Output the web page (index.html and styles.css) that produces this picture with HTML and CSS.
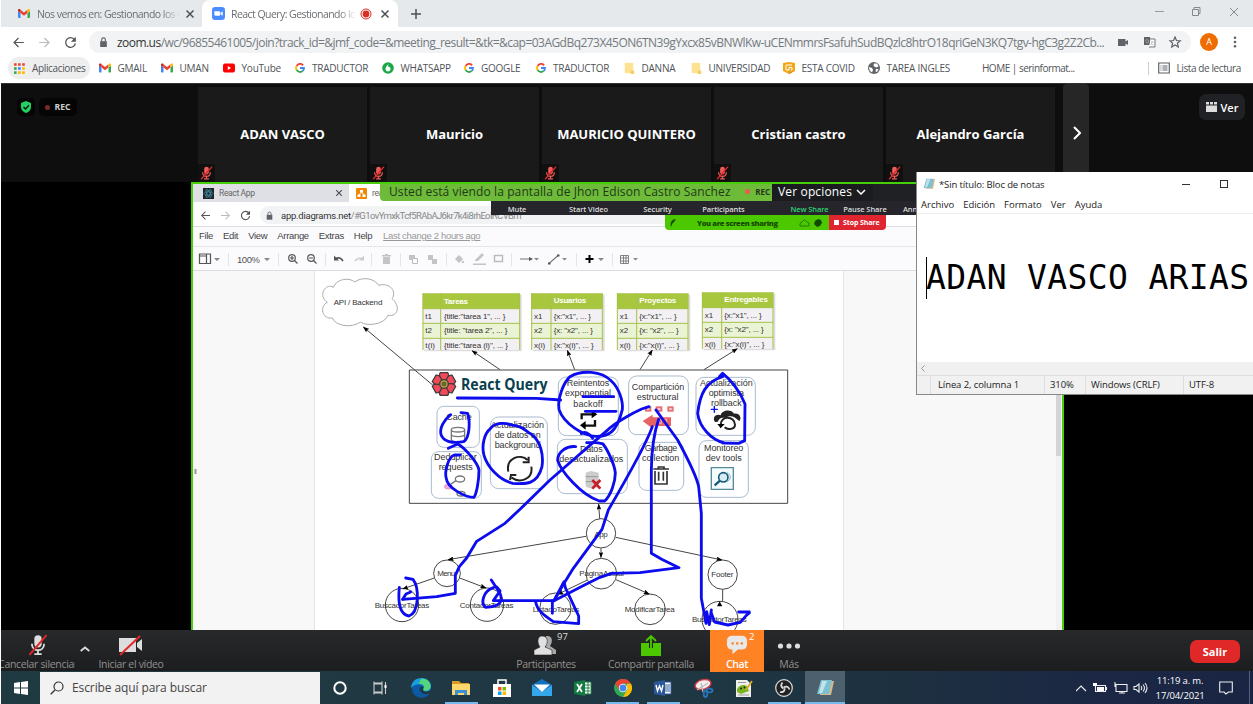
FILE: index.html
```html
<!DOCTYPE html>
<html lang="es">
<head>
<meta charset="utf-8">
<title>React Query: Gestionando los datos</title>
<link rel="stylesheet" href="styles.css">
</head>
<body>
<svg class="defs" width="0" height="0">
  <defs>
    <symbol id="gmail" viewBox="0 0 24 18"><path fill="#4285f4" d="M0 16V4l5 4v10H2q-2 0-2-2z"/><path fill="#34a853" d="M19 18V8l5-4v12q0 2-2 2z"/><path fill="#ea4335" d="M5 8V1.500l7 5.500 7-5.500V8l-7 5.500z"/><path fill="#c5221f" d="M0 4V2.500C0 0 3-.8 5 1v7z"/><path fill="#fbbc04" d="M24 4V2.500C24 0 21-.8 19 1v7z"/></symbol>
    <symbol id="google" viewBox="0 0 24 24"><g fill="none" stroke-width="4.500"><path stroke="#ea4335" d="M19.500 5.500A9.500 9.500 0 0 0 4 7"/><path stroke="#fbbc04" d="M4 7a9.500 9.500 0 0 0 0 10"/><path stroke="#34a853" d="M4 17a9.500 9.500 0 0 0 14.500 2"/><path stroke="#4285f4" d="M18.500 19a9 9 0 0 0 3-7H12"/></g></symbol>
    <symbol id="close" viewBox="0 0 10 10"><path d="M1.500 1.500l7 7m0-7l-7 7" fill="none" stroke="#4d5156" stroke-width="1.500"/></symbol>
    <symbol id="back" viewBox="0 0 16 16"><path d="M14.500 8H3m5-5.500L2.500 8 8 13.500" fill="none" stroke="currentColor" stroke-width="1.500"/></symbol>
    <symbol id="reload" viewBox="0 0 16 16"><path d="M13 4.500A6 6 0 1 0 14 9" fill="none" stroke="currentColor" stroke-width="1.600"/><path d="M14.500 1v6h-6z" fill="currentColor"/></symbol>
    <symbol id="lock" viewBox="0 0 10 12"><path d="M1 5h8v7H1z" fill="#5f6368"/><path d="M2.800 5V3.200a2.200 2.200 0 0 1 4.400 0V5" fill="none" stroke="#5f6368" stroke-width="1.300"/></symbol>
    <symbol id="micoff" viewBox="0 0 16 18"><rect x="5" y="1" width="6" height="10" rx="3" fill="currentColor"/><path d="M3 8c0 7 10 7 10 0M8 13v3M5 16.500h6" fill="none" stroke="currentColor" stroke-width="1.500"/><path d="M1 17L15 1" stroke="#e02828" stroke-width="1.600"/></symbol>
    <symbol id="folder" viewBox="0 0 12 14"><path fill="#fde293" d="M1 1h10v12H1z"/><path fill="#f6cf62" d="M8 10h4v4H8z"/></symbol>
    <symbol id="note" viewBox="0 0 18 18"><path fill="#d7b98a" d="M6 2h12l-3 14H4z"/><path fill="#7cc0d2" d="M5 1h11l-3 14H1z"/><path fill="#c0e3e9" d="M6 2h5L6 14H3z"/></symbol>
  </defs>
</svg>

<header class="tabs">
  <div class="tab idle"><svg class="fav"><use href="#gmail"/></svg><span class="tabname">Nos vemos en: Gestionando los d</span><svg class="x"><use href="#close"/></svg></div>
  <div class="tab live"><svg class="fav zoomfav" viewBox="0 0 14 14"><rect width="14" height="14" rx="3.500" fill="#4a8cff"/><path fill="#fff" d="M2.500 4.500H8.500V9.500H4Q2.500 9.500 2.500 8zM9 6.500L11.500 4.500v5L9 7.800z"/></svg><span class="tabname">React Query: Gestionando los</span><svg class="rec" viewBox="0 0 12 12"><circle cx="6" cy="6" r="5" fill="none" stroke="#d93025"/><circle cx="6" cy="6" r="3.400" fill="#d93025"/></svg><svg class="x"><use href="#close"/></svg></div>
  <svg class="plus" viewBox="0 0 10 10"><path d="M5 0v10M0 5h10" stroke="#4d5156" stroke-width="1.500"/></svg>
  <svg class="winbtns" viewBox="0 0 84 10"><path d="M0 4.500h9" stroke="#999"/><path d="M37.500 2.500h6v6h-6zM39 2.500v-2h6v6h-1.500M75 1l8 8m0-8l-8 8" fill="none" stroke="#888"/></svg>
</header>

<nav class="address">
  <svg class="nav"><use href="#back"/></svg>
  <svg class="nav fwd"><use href="#back"/></svg>
  <svg class="nav"><use href="#reload"/></svg>
  <div class="url"><svg class="lock"><use href="#lock"/></svg><span class="link"><b>zoom.us</b>/wc/96855461005/join?track_id=&amp;jmf_code=&amp;meeting_result=&amp;tk=&amp;cap=03AGdBq273X45ON6TN39gYxcx85vBNWlKw-uCENmmrsFsafuhSudBQzlc8htrO18qriGeN3KQ7tgv-hgC3g2Z2Cb...</span>
    <svg class="urlicons" viewBox="0 0 64 12"><path fill="#5f6368" d="M0 3h7.500v2.500L10 4v5L7.500 7.500V10H0z"/><path fill="#5f6368" d="M26 1h6l2 8h-8z"/><path d="M32.500 3H37v8h-6" fill="#fff" stroke="#777"/><path d="M27.500 4.500q3-2 3 .8t-3 .5M33 6h3m-2-1v1q0 2-1.500 3m.5-2l2.500 2.500" fill="none" stroke="#bbb" stroke-width=".8"/><path d="M57 1l1.500 3.500 3.700.3-2.800 2.400.9 3.800-3.300-2-3.300 2 .9-3.800L52 4.800l3.600-.3z" fill="none" stroke="#5f6368" stroke-width="1.200"/></svg>
  </div>
  <span class="avatar">A</span>
  <svg class="kebab" viewBox="0 0 4 12"><g fill="#5f6368"><circle cx="2" cy="1.700" r="1.300"/><circle cx="2" cy="6" r="1.300"/><circle cx="2" cy="10.300" r="1.300"/></g></svg>
</nav>

<nav class="marks">
  <span class="apps"><svg viewBox="0 0 11 11"><path d="M0 1.500h11" stroke="#ea4335" stroke-width="2.600" stroke-dasharray="2.600 1.500"/><path d="M0 5.500h2.600" stroke="#34a853" stroke-width="2.600"/><path d="M4.100 5.500h2.600" stroke="#4285f4" stroke-width="2.600"/><path d="M8.200 5.500h2.600M4.100 9.600h6.900" stroke="#fbbc04" stroke-width="2.600" stroke-dasharray="2.600 1.500"/><path d="M0 9.600h2.600" stroke="#34a853" stroke-width="2.600"/></svg>Aplicaciones</span>
  <span><svg><use href="#gmail"/></svg>GMAIL</span>
  <span><svg><use href="#gmail"/></svg>UMAN</span>
  <span><svg viewBox="0 0 12 12"><rect y="1.500" width="12" height="9" rx="2" fill="#f00"/><path fill="#fff" d="M4.800 4v4L8 6z"/></svg>YouTube</span>
  <span class="g"><svg><use href="#google"/></svg>TRADUCTOR</span>
  <span><svg viewBox="0 0 12 12"><circle cx="6" cy="6" r="5.800" fill="#19a845"/><path fill="#fff" d="M3.500 7.500q0-3 3-5.500l-.5 2.500q3 .5 2.500 3A2.600 2.600 0 0 1 3.500 7.500z"/></svg>WHATSAPP</span>
  <span class="g"><svg><use href="#google"/></svg>GOOGLE</span>
  <span class="g"><svg><use href="#google"/></svg>TRADUCTOR</span>
  <span><svg><use href="#folder"/></svg>DANNA</span>
  <span><svg><use href="#folder"/></svg>UNIVERSIDAD</span>
  <span><svg viewBox="0 0 12 12"><path fill="#f2a516" d="M0 1l6-1 6 1v8l-6 3-6-3z"/><path fill="#b96a0e" d="M6 11l5-2-5 3z"/><path d="M9 3H3v5h3V5.500h3V8H8" fill="none" stroke="#fff"/></svg>ESTA COVID</span>
  <span><svg viewBox="0 0 12 12"><circle cx="6" cy="6" r="6" fill="#5f6368"/><path fill="#fff" d="M1 5l3 1 1 2-1 2.500Q1 9 1 5zM6 1.500l3 0L10.500 4 9 5.500 7 5 5.500 3.500zM8 7l2.500 0-1.500 3-1.500-.5z"/></svg>TAREA INGLES</span>
  <span class="home">HOME | serinformat...</span>
  <span class="reading"><svg viewBox="0 0 12 12"><path d="M.7 1h10.600v10H.7z" fill="none" stroke="#5f6368" stroke-width="1.200"/><path d="M2.500 4h1m1 0H9.500m-7 2h1m1 0h5m-7 2h1m1 0h5" stroke="#5f6368"/></svg>Lista de lectura</span>
</nav>

<main class="meeting">
  <section class="people">
    <div class="status"><span class="shield"><svg viewBox="0 0 12 12"><path fill="#23d160" d="M6 0l5 2v4q0 4-5 6-5-2-5-6V2z"/><path d="M3.500 6l2 2L9 4.200" fill="none" stroke="#111" stroke-width="1.300"/></svg></span><span class="recording"><i></i>REC</span></div>
    <div class="tile">ADAN VASCO<svg class="mic"><use href="#micoff"/></svg></div>
    <div class="tile">Mauricio<svg class="mic"><use href="#micoff"/></svg></div>
    <div class="tile">MAURICIO QUINTERO<svg class="mic"><use href="#micoff"/></svg></div>
    <div class="tile">Cristian castro<svg class="mic"><use href="#micoff"/></svg></div>
    <div class="tile">Alejandro García<svg class="mic"><use href="#micoff"/></svg></div>
    <div class="next"><svg viewBox="0 0 8 14"><path d="M1 1l6 6-6 6" fill="none" stroke="#fff" stroke-width="2"/></svg></div>
    <div class="view"><svg viewBox="0 0 11 10"><path d="M0 0h3v2.500H0zM4 0h3v2.500H4zM8 0h3v2.500H8zM0 3.500h11V10H0z" fill="#ddd"/></svg>Ver</div>
  </section>

  <section class="shared">
    <div class="stabs"><div class="stab"><svg viewBox="0 0 11 11"><path d="M0 0h11v11H0z" fill="#20232a"/><g fill="none" stroke="#3d8ba0" stroke-width=".8"><ellipse cx="5.500" cy="5.500" rx="4.500" ry="1.700"/><ellipse cx="5.500" cy="5.500" rx="4.500" ry="1.700" transform="rotate(60 5.500 5.500)"/><ellipse cx="5.500" cy="5.500" rx="4.500" ry="1.700" transform="rotate(120 5.500 5.500)"/></g></svg><span>React App</span><svg class="sx"><use href="#close"/></svg></div>
      <div class="stab on"><svg viewBox="0 0 11 11"><rect width="11" height="11" rx="1" fill="#f08705"/><path d="M5.500 4L3 7m2.500-3L8 7" stroke="#fff"/><path d="M4 2h3v2.500H4zM1.500 6.500h3V9h-3zM6.500 6.500h3V9h-3z" fill="#fff"/></svg><span>rea</span></div></div>
    <div class="saddr"><svg><use href="#back"/></svg><svg class="fwd"><use href="#back"/></svg><svg><use href="#reload"/></svg><div class="surl"><svg class="slock"><use href="#lock"/></svg><span><b>app.diagrams.net</b>/#G1ovYmxkTcf5RAbAJ6kr7k4i8rhEoIRCVBm</span></div></div>
    <div class="smenu"><span>File</span><span>Edit</span><span>View</span><span>Arrange</span><span>Extras</span><span>Help</span><u>Last change 2 hours ago</u></div>
    <div class="stools">
      <svg viewBox="193 247 868 23" width="868" height="23">
        <g fill="none" stroke="#555" stroke-width="1.200"><path d="M199.500 254h11v9.500h-11zM199.500 256h7m0-2v9.500"/><circle cx="292" cy="258" r="3.300"/><path d="M290 258h4m-2-2v4m2.500.5l3 3"/><circle cx="311" cy="258" r="3.300"/><path d="M309 258h4m.5 2.500l3 3"/><path d="M335 259q5-3 8 2" stroke-width="1.500"/></g>
        <g fill="none" stroke="#777" stroke-width="1.100"><path d="M520 259h10M549 263.500l9-8"/></g>
        <path fill="#555" d="M334 255.500v5h5zM529 257v4l4-2zM548 262.500h2.500v2H548zM557 254.500h2.500v2H557z"/><path fill="#ccc" d="M364 255.500v5h-5z"/><path d="M355 261q3-4 8-2" fill="none" stroke="#ccc" stroke-width="1.500"/>
        <path fill="#888" d="M214 258h6l-3 3zM264 258h6l-3 3zM534 258h5l-2.500 2.500zM562 258h5l-2.500 2.500zM598 258h6l-3 3zM633 258h5l-2.500 2.500z"/>
        <path d="M228.500 253v13M278.500 253v13M325.500 253v13M371.500 253v13M400.500 253v13M446.500 253v13M511.500 253v13M576.500 253v13M612.500 253v13" stroke="#e4e4e4"/>
        <path fill="#c4c4c4" d="M382 255h9v1.500h-9zM385 254h3v1h-3zM383 257h7v7h-7zM409 255h6v5h-6zM428 255h5v5h-5zM432 259h5v5h-5zM455 259l4-4 4 4-4 4zM463 260l1.500 3h-3zM473 263.500h13v1.500h-13zM475 260l7-7 2 2-6 6h-3z"/><path d="M412.500 258.500h5v5h-5z" fill="#fbfbfd" stroke="#bbb"/>
        <path d="M494.500 255.500h8v6h-8z" fill="none" stroke="#bbb" stroke-width="1.500"/><path d="M589.500 255v8m-4-4h8" stroke="#000" stroke-width="2"/><path d="M620.500 255.500h8v8h-8zM623.500 255v9m2.500-9v9m-6-6h9m-9 3h9" fill="none" stroke="#777" stroke-width=".9"/>
        <text x="237" y="262.500" font-size="9.500" textLength="23" fill="#555">100%</text>
      </svg>
    </div>
    <div class="canvas">
      <div class="paper"></div>
      <svg class="diagram" viewBox="193 271 870 359" width="870" height="359">
        <defs>
          <marker id="arr" markerWidth="18" markerHeight="14" refX="17" refY="7" orient="auto" markerUnits="userSpaceOnUse"><path d="M0 0l18 7-18 7 3-7z"/></marker>
          <g id="grid3"><path d="M4 4h216v170H4z" fill="#ddd"/><path fill="#f2f0f2" d="M0 0h214v170H0z"/><path fill="#a9c63f" d="M0 0h214v46H0z"/><path fill="#eaf3d3" d="M0 90h214v45H0z"/><path d="M1 0v170M59 0v170M213 0v170M0 46h214M0 90h214M0 135h214" stroke="#a5c249" stroke-width="3"/></g>
        </defs>
        <path d="M195.500 469v5" stroke="#999" stroke-width="2"/>
        <path d="M1056 271h5v359h-5z" fill="#f1f1f1"/><path d="M1056 390h5v66h-5z" fill="#d4d4d4"/>
        <g transform="translate(310 270) scale(.33333)" class="draw">
          <path class="thin" stroke="#aaa" d="M70 52C80 25 120 22 134 36c25-18 60-10 72 10 35-10 55 20 40 40 25 20 20 55-12 50-10 28-65 34-82 20-30 20-75 12-85-12-30 5-40-35-15-47-30-20-5-60 18-45z"/>
          <text x="71" y="105" textLength="146">API / Backend</text>
          <g class="table"><path fill="#ddd" d="M342 74h293v170H342z"/><path fill="#f2f0f2" d="M338 70h292v170H338z"/><path fill="#a9c63f" d="M338 70h292v46H338z"/><path fill="#eaf3d3" d="M338 160h292v45H338z"/><path d="M339 70v170M392 70v170M629 70v170M338 116h292M338 160h292M338 205h292" stroke="#a5c249" stroke-width="3"/>
          <text class="th" x="402" y="102" textLength="72">Tareas</text><text x="346" y="147" textLength="20">t1</text><text x="402" y="147" textLength="184">{title:"tarea 1", ... }</text><text x="346" y="190" textLength="20">t2</text><text x="402" y="190" textLength="190">{title: "tarea 2", ... }</text><text x="346" y="234" textLength="29">t(i)</text><text x="402" y="234" textLength="192">{title:"tarea (i)", ... }</text></g>
          <g class="table" transform="translate(664 70)"><use href="#grid3"/><text class="th" x="67" y="30" textLength="98">Usuarios</text><text x="8" y="76">x1</text><text x="67" y="76" textLength="112">{x:"x1", ... }</text><text x="8" y="120">x2</text><text x="67" y="120" textLength="118">{x: "x2", ... }</text><text x="8" y="163">x(i)</text><text x="67" y="163" textLength="120">{x:"x(i)", ... }</text></g>
          <g class="table" transform="translate(921 70)"><use href="#grid3"/><text class="th" x="67" y="30" textLength="111">Proyectos</text><text x="8" y="76">x1</text><text x="67" y="76" textLength="112">{x:"x1", ... }</text><text x="8" y="120">x2</text><text x="67" y="120" textLength="118">{x: "x2", ... }</text><text x="8" y="163">x(i)</text><text x="67" y="163" textLength="120">{x:"x(i)", ... }</text></g>
          <g class="table" transform="translate(1176 67)"><use href="#grid3"/><text class="th" x="67" y="30" textLength="131">Entregables</text><text x="8" y="76">x1</text><text x="67" y="76" textLength="112">{x:"x1", ... }</text><text x="8" y="120">x2</text><text x="67" y="120" textLength="118">{x: "x2", ... }</text><text x="8" y="163">x(i)</text><text x="67" y="163" textLength="120">{x:"x(i)", ... }</text></g>
          <path class="thin" d="M298 300h1135v400H298z"/>
          <g class="thin link" marker-end="url(#arr)"><path d="M368 345L160 171"/><path d="M570 299L486 242"/><path d="M794 299L772 241"/><path d="M990 299L1027 240"/><path d="M1182 299L1282 236"/></g>
          <g fill="#f04a5c" stroke="#403d3a" stroke-width="4"><path id="petal" d="M402 336C387 326 386 314 391 308h22C418 314 417 326 402 336z"/><use href="#petal" transform="rotate(60 402 342)"/><use href="#petal" transform="rotate(120 402 342)"/><use href="#petal" transform="rotate(180 402 342)"/><use href="#petal" transform="rotate(240 402 342)"/><use href="#petal" transform="rotate(300 402 342)"/><circle cx="402" cy="342" r="13" fill="#b5a642"/></g>
          <circle cx="402" cy="342" r="6" fill="#777128" stroke="#403d3a" stroke-width="2"/>
          <text class="brand" x="453" y="361" textLength="260" lengthAdjust="spacingAndGlyphs">React Query</text>
          <g class="box"><rect x="381" y="409" width="127" height="123" rx="20"/><rect x="364" y="545" width="150" height="140" rx="22"/><rect x="541" y="441" width="171" height="215" rx="25"/><rect x="745" y="321" width="180" height="176" rx="24"/><rect x="742" y="508" width="210" height="163" rx="24"/><rect x="956" y="318" width="179" height="176" rx="24"/><rect x="987" y="517" width="134" height="144" rx="22"/><rect x="1158" y="322" width="178" height="174" rx="24"/><rect x="1167" y="512" width="148" height="170" rx="22"/></g>
          <g class="label"><text x="447" y="450" textLength="76">Cache</text><text x="436" y="569" textLength="128">Deduplicar</text><text x="437" y="600" textLength="102">requests</text><text x="622" y="474" textLength="160">Actualización</text><text x="623" y="504" textLength="138">de datos en</text><text x="623" y="535" textLength="138">background</text><text x="834" y="348" textLength="128">Reintentos</text><text x="834" y="379" textLength="138">exponential</text><text x="834" y="410" textLength="88">backoff</text><text x="1044" y="359" textLength="157">Compartición</text><text x="1043" y="389" textLength="125">estructural</text><text x="1249" y="347" textLength="158">Actualización</text><text x="1249" y="377" textLength="106">optimista</text><text x="1249" y="407" textLength="92">rollback</text><text x="844" y="547" textLength="68">Datos</text><text x="844" y="577" textLength="192">desactualizados</text><text x="1053" y="544" textLength="98">Garbage</text><text x="1052" y="574" textLength="112">collection</text><text x="1241" y="543" textLength="118">Monitoreo</text><text x="1241" y="574" textLength="108">dev tools</text></g>
          <g fill="none" stroke="#777" stroke-width="4"><path d="M424 480v28c0 10 40 10 40 0v-28M424 493c0 9 40 9 40 0"/><ellipse cx="444" cy="479" rx="20" ry="7"/><ellipse cx="450" cy="627" rx="14" ry="9"/><path d="M438 632L417 646"/><ellipse cx="453" cy="671" rx="12" ry="7"/></g><ellipse cx="415" cy="650" rx="12" ry="7" fill="#f8a8dd" stroke="#d687b7" stroke-width="2"/>
          <g fill="none" stroke="#222" stroke-width="6"><path d="M595 605c-8-40 35-56 58-35m11 20c6 38-34 51-59 33M656 560v17h-18M600 630l3-15h16"/></g>
          <g fill="none" stroke="#111" stroke-width="7"><path d="M815 448v-15h38M855 450v17h-37"/></g><path d="M845 421l17 12-17 12zM827 453l-17 13 17 13z"/>
          <path fill="#e86461" d="M998 453l30-19v8h55v26h-55v8z"/><g fill="none" stroke="#e47173" stroke-width="6"><rect x="1008" y="412" width="13" height="10"/><rect x="1040" y="412" width="14" height="10"/><rect x="1075" y="412" width="13" height="10"/></g><path d="M1048 460v-12h6v12zm15-10l7-3v13" stroke="#fab2b1" fill="none" stroke-width="3"/>
          <path fill="#222" d="M1215 456c-10-15 5-26 17-20 5-18 33-18 40-5 18-3 24 15 16 22-15-12-25-20-43-9-12-3-20 3-21 11z"/><path d="M1232 464c0-28 42-28 43 0 0 14-22 17-31 8" fill="none" stroke="#222" stroke-width="6"/><path d="M1222 462h22l-12 13z"/>
          <path fill="#ccc" d="M827 608l16-5 23 5v42l-20 7-19-7z"/><path d="M827 620h38M827 635h38" stroke="#999" stroke-width="3"/><path d="M847 630l24 26m0-26l-24 26" stroke="#c7202c" stroke-width="8"/>
          <g fill="none" stroke="#333" stroke-width="5"><path d="M1030 597h47M1045 597v-6h17v6M1035 603v39h36v-39M1046 605v27M1060 605v27"/></g>
          <path d="M1204 593h66v65h-66z" fill="#f3fbfd" stroke="#568a9d" stroke-width="4"/><circle cx="1240" cy="622" r="14" fill="#d7edf3" stroke="#155b79" stroke-width="5"/><path d="M1230 632l-16 14" stroke="#155b79" stroke-width="7"/><path d="M1250 607q22 13 2 28" stroke="#86b2c4" stroke-width="3" fill="none"/>
          <g transform="translate(180 660)">
            <g class="thin"><circle cx="693" cy="130" r="44"/><circle cx="231" cy="250" r="40"/><circle cx="694" cy="251" r="46"/><circle cx="1058" cy="254" r="44"/><circle cx="96" cy="345" r="50"/><circle cx="351" cy="344" r="50"/><circle cx="556" cy="356" r="47"/><circle cx="840" cy="358" r="46"/><circle cx="1050" cy="388" r="54"/></g>
            <g class="thin link" marker-end="url(#arr)"><path d="M689 86L686 42"/><path d="M648 139L234 209"/><path d="M737 142L1056 210"/><path d="M693 175V203"/><path d="M193 264L98 297"/><path d="M269 264L348 294"/><path d="M652 270L563 313"/><path d="M738 269L838 312"/></g><path class="thin" d="M1058 298v36"/><path d="M1049 334l-8 15h16z"/>
            <g class="node"><text x="693" y="140" textLength="40">App</text><text x="229" y="258" textLength="54">Menu</text><text x="695" y="258" textLength="134">PaginaActual</text><text x="1057" y="262" textLength="66">Footer</text><text x="96" y="354" textLength="164">BuscadorTareas</text><text x="350" y="353" textLength="161">ContadorTareas</text><text x="558" y="366" textLength="140">ListadoTareas</text><text x="839" y="366" textLength="150">ModificarTarea</text><text x="1048" y="396" textLength="164">BuscadorTareas</text></g>
          </g>
          <g class="ink">
            <path d="M442 384L680 385 752 390"/><path d="M422 434c-20 16-34 40-29 60 6 18 30 28 68 21 18-10 20-60 12-85l-20-2"/><path d="M415 535l28-13c20 10 60 55 64 78 0 30-7 70-15 82-25 0-80-27-83-56-6-20 5-65 24-71l17 0"/>
            <path d="M607 465c-20-7-50-9-66 11-18 15-27 50-19 80 10 35 46 74 86 84 40 3 74 4 88-50 5-35-3-75-33-98-20-12-25-24-65-28"/>
            <path d="M780 320c-20 18-38 66-33 98 14 43 74 80 110 81 40 2 64-15 80-80 3-25-10-65-33-86-30-30-88-34-124-13z"/><path d="M819 380h92M826 424h92"/><path d="M814 491c10-8 24-2 34 14"/><path d="M830 518h20"/>
            <path d="M797 530c-27-3-54 15-54 41 10 32 68 103 125 122l16 0c20-18 32-60 32-84-2-24-22-68-37-87-12-3-20-5-28-4"/>
            <path d="M1017 410L995 417C970 428 920 455 895 478L720 630 630 718 585 760 500 814 470 864 448 890 436 916 436 970 380 980 278 988"/>
            <path d="M1027 470C1010 520 930 660 895 720L876 778 790 895 765 935 732 992H550L570 963 560 951"/><path d="M1046 448C1035 480 1025 520 1024 600V850L1055 868 1107 893 990 908 905 910 870 922 825 944 732 992"/><path d="M1038 420L1103 510C1130 560 1160 620 1166 650L1174 730 1174 985 1188 1060 1190 1025 1198 1064 1204 1020"/>
            <path d="M1238 320c-50 15-68 50-75 110 5 40 40 80 80 89l43 1 18-8 1-110c-15-40-45-75-67-92l-10 10"/><path class="cross" d="M1204 418h18m-9-9v18"/>
            <path d="M287 924l22 4c20 26 18 100-12 110-26-4-34-36-29-86M278 988l10-16 14-6"/><path d="M544 930l26 40c10 25 0 40-43 42-15-10-10-48 23-59M732 992L762 935l4 18 40 85 0 23-76-6c-30-20-48-33-53-59M727 992v38"/><path d="M1204 1030l10 26 40 9 37-8 18-21 9-7V1026h-32"/>
          </g>
        </g>
      </svg>
    </div>
    <div class="presenter"><div class="pmenu"><span>Mute</span><span>Start Video</span><span>Security</span><span>Participants</span><span class="new">New Share</span><span>Pause Share</span><span class="ann">Annotate</span></div>
      <div class="pshare"><div class="pgreen"><svg viewBox="0 0 7 8"><path fill="#124b00" d="M1 8Q-1 1 6 0L4 3Q2 4 1 8z"/></svg><b>You are screen sharing</b><svg class="cl" viewBox="0 0 24 8"><path d="M1 7Q0 4 3 3q2-4 5 0 3 0 2 4z" fill="none" stroke="#237c00"/><path fill="#124b00" d="M19 0l3 1 1 3-2 3-3 1-3-3 1-3z"/></svg></div><div class="pred"><i></i>Stop Share</div></div></div>
    <div class="banner"><div class="viewing">Usted está viendo la pantalla de Jhon Edison Castro Sanchez<small><i></i>REC</small></div><div class="options">Ver opciones<svg viewBox="0 0 10 6"><path d="M1 1l4 4 4-4" fill="none" stroke="#fff" stroke-width="1.500"/></svg></div></div>
  </section>
</main>

<footer class="controls">
  <div class="ctl clip"><svg viewBox="0 0 16 18"><use href="#micoff"/></svg><span>Cancelar silenciar</span></div>
  <svg class="caret" viewBox="0 0 10 6"><path d="M.7 5L5 1.500 9.300 5" fill="none" stroke="#ddd" stroke-width="1.800"/></svg>
  <div class="ctl"><svg class="wide" viewBox="0 0 24 20"><path fill="#ddd" d="M0 3h17v14H0zM18 8l5-4v12l-5-4z"/><path d="M1 20L21 1" stroke="#e02828" stroke-width="2"/></svg><span>Iniciar el vídeo</span></div>
  <div class="ctl people-c"><svg class="wide" viewBox="0 0 24 20"><path fill="#aaa" d="M12 1c7-1 7 6 4 10l6 4v4H12z"/><path fill="#e0e0e0" stroke="#222" stroke-width=".6" d="M8 1c7 0 6 8 3 11l7 3v5H0v-5l6-3C3 8 3 1 8 1z"/></svg><sup>97</sup><span>Participantes</span></div>
  <div class="ctl"><svg class="wide" viewBox="0 0 24 22"><path fill="#4bc800" d="M2 9h8V22H2zM14 9h8V22h-8zM9 14h6v8H9z"/><path d="M12 16V2M7 7l5-5 5 5" fill="none" stroke="#4bc800" stroke-width="1.800"/></svg><span>Compartir pantalla</span></div>
  <div class="ctl chat"><svg class="wide" viewBox="0 0 24 22"><path fill="#e8e8e8" d="M7 1h10q6 0 6 6v3q0 6-6 6h-4l-6 5v-5q-6 0-6-6V7q0-6 6-6z"/><path fill="#ff8225" d="M6 8h2.500v2.500H6zM11 8h2.500v2.500H11zM16 8h2.500v2.500H16z"/></svg><sup>2</sup><span>Chat</span></div>
  <div class="ctl"><svg class="wide" viewBox="0 0 24 20"><g fill="#ddd"><circle cx="3.500" cy="11" r="2.600"/><circle cx="12" cy="11" r="2.600"/><circle cx="20.500" cy="11" r="2.600"/></g></svg><span>Más</span></div>
  <button class="leave">Salir</button>
</footer>

<footer class="taskbar">
  <div class="cell start"><svg viewBox="0 0 14 14"><path fill="#fff" d="M0 2l6-1v5.600H0zM7 .9L14 0v6.600H7zM0 7.500h6V13l-6-1zM7 7.500h7V14l-7-1z"/></svg></div>
  <div class="search"><svg viewBox="0 0 14 14"><circle cx="8.500" cy="5.500" r="4.500" fill="none" stroke="#333" stroke-width="1.200"/><path d="M5 9L.7 13.300" stroke="#333" stroke-width="1.300"/></svg>Escribe aquí para buscar</div>
  <div class="cell"><svg viewBox="0 0 18 18"><circle cx="9" cy="9" r="5.700" fill="none" stroke="#fff" stroke-width="2"/></svg></div>
  <div class="cell"><svg viewBox="0 0 18 18"><path d="M2 5h8v8H2zM2 2.500V4h8V2.500M2 15.500V14h8v1.500M13.500 3v12" fill="none" stroke="#ccc" stroke-width="1.100"/><path d="M12.500 6h2v3h-2z" fill="#fff"/></svg></div>
  <div class="cell"><svg class="big" viewBox="0 0 20 20"><path fill="#0c59a4" d="M1 11C2 2 15 3 14 10c-4-4-8 1-3 5 3 2 6 1 8 0-6 9-18 4-18-4z"/><path fill="#1b9de2" d="M0 10C1-4 21-2 20 9c0 6-9 5-8 2 3-4-5-8-12-1z"/><path fill="#53d67a" d="M10 1c6-1 10 4 9.500 8-1 5-8 4-7 2 2-2 0-6-5-5z"/></svg></div>
  <div class="cell open"><svg viewBox="0 0 18 18"><path fill="#d99b25" d="M0 2h7l2 2h8v5H0z"/><path fill="#ffd76c" d="M0 5h18v11H0z"/><path fill="#3b91d5" d="M3 11h12v5h-3v-2H6v2H3z"/></svg></div>
  <div class="cell"><svg class="big" viewBox="0 0 20 20"><path d="M6 6V2h8v4" fill="none" stroke="#fff" stroke-width="1.500"/><path fill="#fff" d="M1 6h18v13H1z"/><path fill="#f25022" d="M6 9h3.500v3.500H6z"/><path fill="#7fba00" d="M10.500 9H14v3.500h-3.500z"/><path fill="#00a4ef" d="M6 13.500h3.500V17H6z"/><path fill="#ffb900" d="M10.500 13.500H14V17h-3.500z"/></svg></div>
  <div class="cell"><svg class="big" viewBox="0 0 20 20"><path fill="#1371be" d="M0 7l10-6 10 6v11H0z"/><path fill="#35a7ec" d="M0 7l10 7 10-7v11H0z"/><path fill="#fff" d="M2 6.500h16L10 14z"/></svg></div>
  <div class="cell"><svg viewBox="0 0 18 18"><path fill="#fff" stroke="#23814d" d="M10 3h7v12h-7z"/><path d="M11 6h5m-5 3h5m-5 3h5M14 3v12" stroke="#23814d"/><path fill="#107c41" d="M0 3l11-2v16L0 15z"/><path d="M3 5l5 8m0-8l-5 8" stroke="#fff" stroke-width="1.700"/></svg></div>
  <div class="cell open"><svg viewBox="0 0 18 18"><circle cx="9" cy="9" r="9" fill="#34a853"/><path fill="#fbbc05" d="M16.800 4.500A9 9 0 0 1 9 18l4-7V4.500z"/><path fill="#ea4335" d="M1.200 4.500A9 9 0 0 1 16.800 4.500H9L5 11z"/><circle cx="9" cy="9" r="4.200" fill="#fff"/><circle cx="9" cy="9" r="3.400" fill="#4285f4"/></svg></div>
  <div class="cell open"><svg viewBox="0 0 18 18"><path fill="#fff" stroke="#2b579a" d="M10 3h7v12h-7z"/><path d="M11 6h5m-5 2h5m-5 2h5m-5 2h5" stroke="#2b579a"/><path fill="#2b579a" d="M0 3l11-2v16L0 15z"/><path d="M2 6l1.500 6L5.500 7l2 5L9 6" fill="none" stroke="#fff" stroke-width="1.400"/></svg></div>
  <div class="cell"><svg class="big" viewBox="0 0 20 20"><ellipse cx="9" cy="6.500" rx="8" ry="4.800" transform="rotate(-15 9 6.500)" fill="#f5eeee" stroke="#d33b45" stroke-width="1.500"/><path d="M3 12l11-7m-5 9l-2-9" stroke="#bbb" stroke-width="1.200"/><g fill="none" stroke="#2774bb" stroke-width="1.800"><ellipse cx="11.500" cy="16" rx="1.800" ry="3"/><ellipse cx="15.500" cy="12.500" rx="3" ry="1.800"/></g></svg></div>
  <div class="cell"><svg viewBox="0 0 18 18"><path fill="#eee" d="M1 1h11l4 4v13H1z"/><path d="M3 3.500h8M3 16h11" stroke="#999"/><path fill="#79b51c" d="M2 10q4-6 10-3l2 5-8 3-4-2z"/><circle cx="6" cy="9.500" r="1" fill="#222"/><circle cx="9.500" cy="8.500" r="1" fill="#222"/><path d="M17 2l-6 9" stroke="#d9a928" stroke-width="1.800"/></svg></div>
  <div class="cell open"><svg viewBox="0 0 18 18"><circle cx="9" cy="9" r="8.300" fill="#222" stroke="#ddd" stroke-width="1.200"/><g fill="none" stroke="#ddd" stroke-width="1.800"><path id="blade" d="M8.500 9.500Q4.500 7 7.500 3.500"/><use href="#blade" transform="rotate(120 9 9)"/><use href="#blade" transform="rotate(240 9 9)"/></g></svg></div>
  <div class="cell open current"><svg><use href="#note"/></svg></div>
  <svg class="tray" viewBox="0 0 72 12"><g fill="none" stroke="#eee" stroke-width="1.100"><path d="M0 9l5-5 5 5M19.500 3.500h10v6h-10zM30.500 5v3M40 2.500h11v7H40zM43 11h6m-3-2v2M39 0v5M58 4.500h2l3-2.500v8l-3-2.500h-2zM65 4q1.500 2 0 4M67 2.500q3 3.500 0 7M69 1q4 5 0 10"/></g><path fill="#fff" d="M21 5h7v4h-7zM17 1h4v3h-4z"/></svg>
  <div class="clock"><span>11:19 a. m.</span><span>17/04/2021</span></div>
  <svg class="notif" viewBox="0 0 14 14"><path d="M.7 1h12.600v10H9.500L7 13l-2-2H.7z" fill="none" stroke="#eee" stroke-width="1.100"/></svg>
  <i class="desk"></i>
</footer>

<aside class="notepad">
  <div class="ntitle"><svg><use href="#note"/></svg><span>*Sin título: Bloc de notas</span><i class="min"></i><i class="max"></i></div>
  <div class="nmenu"><span>Archivo</span><span>Edición</span><span>Formato</span><span>Ver</span><span>Ayuda</span></div>
  <div class="ntext"><i></i><span>ADAN VASCO ARIAS</span></div>
  <div class="nscroll"><svg viewBox="0 0 4 7"><path d="M3.500.5l-3 3 3 3" fill="none" stroke="#999"/></svg></div>
  <div class="nstatus"><span></span><span>Línea 2, columna 1</span><span>310%</span><span>Windows (CRLF)</span><span>UTF-8</span></div>
</aside>
</body>
</html>
```
FILE: styles.css
```css
* { box-sizing: border-box; }
body { margin: 0; width: 1253px; height: 704px; overflow: hidden; position: relative; display: flex; flex-direction: column; font-family: "Open Sans", "Noto Sans", sans-serif; font-size: 11px; background: #fff; white-space: nowrap; }
svg { display: block; flex: none; }
.defs { position: absolute; }

.tabs { height: 27px; flex: none; margin-left: 1px; background: #e6e9ec; display: flex; align-items: center; color: #6b6f73; }
.tab { display: flex; align-items: center; height: 27px; }
.idle { width: 201px; padding-left: 17px; }
.live { width: 196px; background: #fff; border-radius: 8px 8px 0 0; padding-left: 10px; }
.fav { width: 12px; height: 9px; margin-right: 7px; }
.zoomfav { width: 13px; height: 13px; margin-right: 6px; }
.tabname { width: 143px; overflow: hidden; font-size: 10.500px; letter-spacing: -.55px; mask-image: linear-gradient(90deg, #000 87%, transparent); }
.live .tabname { width: 125px; margin-right: 4px; }
.x { width: 10px; height: 10px; margin-left: 5px; }
.rec { width: 12px; height: 12px; }
.live .x { margin-left: 8px; }
.plus { width: 10px; height: 10px; margin-left: 13px; }
.winbtns { width: 84px; height: 10px; margin: -3px 14px 0 auto; }

.address { height: 30px; flex: none; display: flex; align-items: center; padding-left: 12px; }
.nav { width: 13px; height: 13px; margin-right: 13px; color: #555; }
.fwd { color: #bbb; transform: scaleX(-1); }
.address .nav:nth-child(3) { margin-right: 12px; }
.url { width: 1102px; flex: none; height: 22px; border-radius: 11px; background: #f1f3f4; display: flex; align-items: center; padding-left: 10px; color: #757a7f; font-size: 12px; }
.lock { width: 9px; height: 10px; margin-right: 9px; }
.link { width: 987px; letter-spacing: -.54px; }
.link b { font-weight: 400; color: #333; }
.urlicons { width: 64px; height: 12px; margin-left: 14px; }
.avatar { width: 18px; height: 18px; border-radius: 50%; background: #ee6c00; color: #fff; text-align: center; line-height: 18px; font-size: 9px; margin-left: 9px; }
.kebab { width: 4px; height: 12px; margin-left: 15px; }

.marks { height: 26px; flex: none; padding: 0 0 4px 8px; display: grid; grid-template-columns: 91px 62px 62px 72px 87px 82px 72px 87px 67px 93px 85px 114px 166px 105px; align-items: center; font-size: 10px; color: #505458; letter-spacing: -.24px; }
.marks span { display: flex; align-items: center; height: 20px; }
.marks svg { width: 12px; height: 12px; margin-right: 6.500px; }
.marks .g svg { width: 10px; height: 10px; margin-right: 7px; }
.marks .apps { width: 82px; height: 22px; border-radius: 11px; background: #eee; padding-left: 6px; letter-spacing: -.35px; }
.marks .apps svg { width: 11px; height: 11px; margin-right: 7px; }
.marks .home { letter-spacing: -.5px; }
.marks .reading { border-left: 1px solid #ccc; height: 13px; padding-left: 9px; letter-spacing: -.4px; }

.meeting { height: 547px; flex: none; margin-left: 1px; background: #000; position: relative; }
.people { height: 99px; background: #0e0e0e; border-top: 1px solid #333; display: grid; grid-template-columns: 197px 172px 172px 172px 172px 177px 26px 1fr; padding-top: 3px; color: #fff; }
.tile { width: 169px; background: #1a1a1a; position: relative; display: flex; align-items: center; justify-content: center; padding-bottom: 2px; font-weight: 700; font-size: 13px; letter-spacing: -.02px; }
.mic { position: absolute; left: 0; bottom: 0; width: 17px; height: 18px; padding: 2px; background: #101010; color: #f05b5b; }
.next { background: #262626; margin-top: -3px; border-radius: 4px 4px 0 0; display: flex; align-items: center; justify-content: center; padding-left: 2px; }
.next svg { width: 8px; height: 14px; }
.view { justify-self: end; width: 46px; height: 26px; margin: 7px 8px 0 0; background: #202124; border-radius: 7px; display: flex; align-items: center; justify-content: center; gap: 4px; font-size: 11px; font-weight: 600; }
.view svg { width: 11px; height: 10px; }
.status { display: flex; gap: 4px; padding: 11px 0 0 16px; height: 30px; }
.status span { background: #050505; border-radius: 5px; height: 18px; display: flex; align-items: center; justify-content: center; }
.shield { width: 18px; }
.shield svg { width: 12px; height: 12px; }
.recording { width: 38px; gap: 4px; font-size: 8.700px; font-weight: 700; color: #ccc; }
.recording i { width: 5px; height: 5px; border-radius: 50%; background: #7c2929; }

.shared { width: 873px; height: 448px; margin-left: 190px; border: 2px solid #48cf0b; border-bottom: 0; background: #fff; position: relative; font-family: Roboto, sans-serif; overflow: hidden; }
.stabs { height: 18px; background: #dee1e6; display: flex; }
.stab { width: 156px; height: 18px; display: flex; align-items: center; padding-left: 10px; font-size: 8.500px; color: #666; background: #dfe0e5; }
.stab svg { width: 11px; height: 11px; margin-right: 5px; }
.stab span { letter-spacing: -.35px; width: 36px; }
.stab .sx { width: 8px; height: 8px; margin: 0 0 0 80px; }
.stab.on { width: 580px; background: #fff; padding-left: 7px; }
.saddr { height: 24px; display: flex; align-items: center; padding: 2px 0 0 7px; color: #555; }
.saddr svg { width: 11px; height: 11px; margin-right: 9px; }
.surl { width: 620px; height: 18px; border-radius: 9px; background: #f2f3f5; display: flex; align-items: center; font-size: 9.500px; color: #888; padding-left: 6px; letter-spacing: -.62px; }
.saddr .slock { width: 7px; height: 9px; margin-right: 8px; }
.surl b { font-weight: 400; color: #333; letter-spacing: -.25px; }
.smenu { height: 21px; background: #fbfbfd; border-top: 1px solid #ddd; border-bottom: 1px solid #e6e6e6; display: flex; align-items: center; gap: 10px; padding: 0 0 2px 6px; color: #444; font: 9.500px "Liberation Sans", sans-serif; letter-spacing: -.32px; }
.smenu u { color: #999; margin-left: 1px; }
.stools { height: 24px; background: #fbfbfd; border-bottom: 1px solid #ddd; font-family: "Liberation Sans", sans-serif; }
.canvas { height: 359px; background: #f8f8f8; position: relative; }
.paper { width: 530px; height: 359px; margin-left: 121px; background: #fff; border: solid #e4e4e4; border-width: 0 1px; }
.diagram { position: absolute; left: 0; top: 0; }
.draw { font-family: "Liberation Sans", sans-serif; }
.draw text { font-size: 24px; fill: #333; }
.draw .th { fill: #fff; font-weight: 700; }
.thin { fill: none; stroke: #444; stroke-width: 3; }
.thin[stroke] { stroke: #aaa; }
.draw .brand { font: 700 46px "Open Sans", sans-serif; fill: #07404f; }
.box rect { fill: none; stroke: #a9bbcd; stroke-width: 3; }
.draw .label text { text-anchor: middle; font-size: 27px; }
.draw .node text { text-anchor: middle; font-size: 24px; }
.ink path { fill: none; stroke: #0c0cee; stroke-width: 8.500; stroke-linecap: round; stroke-linejoin: round; }
.ink .cross { stroke-width: 4; }

.presenter { position: absolute; left: 298px; top: 0; width: 440px; }
.pmenu { height: 31px; padding: 20px 0 0; background: linear-gradient(#202125 17px, #25252b 17px); display: grid; grid-template-columns: 52px 91px 47px 85px 87px 24px 60px; font: 600 7.500px "Open Sans", sans-serif; letter-spacing: -.1px; color: #ddd; clip-path: polygon(0 17px, 281px 17px, 281px 0, 100% 0, 100% 100%, 0 100%); }
.pmenu span { width: 0; justify-self: center; display: flex; justify-content: center; }
.pmenu .new { color: #2bd575; }
.pmenu .ann { justify-self: start; justify-content: flex-start; margin-left: 26px; }
.pshare { display: flex; margin-left: 174px; height: 15px; width: 221px; color: #fff; font: 700 7.500px "Open Sans", sans-serif; }
.pgreen { width: 164px; background: #4bc800; color: #174c00; display: flex; align-items: center; padding-left: 5px; border-radius: 0 0 0 4px; letter-spacing: -.35px; }
.pgreen svg { width: 7px; height: 8px; margin-right: 20px; }
.pgreen .cl { width: 24px; margin: 0 6px 0 auto; }
.pred { width: 57px; background: #df2630; display: flex; align-items: center; padding-left: 5px; gap: 4px; border-radius: 0 0 4px 0; font-size: 7px; letter-spacing: -.1px; }
.pred i { width: 5px; height: 5px; background: #fff; }
.banner { position: absolute; left: 187px; top: -2px; display: flex; height: 19px; font: 12px/20px "Open Sans", sans-serif; }
.viewing { width: 392px; padding-left: 9px; background: #6dbb38; color: #24381b; border-radius: 0 0 0 4px; display: flex; letter-spacing: .1px; }
.viewing small { margin-left: auto; display: flex; align-items: center; gap: 5px; font-size: 8px; font-weight: 700; padding-right: 2px; letter-spacing: 0; }
.viewing small i { width: 5px; height: 5px; background: #ed594f; border-radius: 50%; }
.options { width: 101px; background: #1b1c20; color: #fff; padding-left: 6px; display: flex; align-items: center; gap: 4px; letter-spacing: .15px; }
.options svg { width: 10px; height: 6px; }

.controls { height: 41px; flex: none; margin-left: 1px; background: linear-gradient(#28292a, #1c1d1e); color: #919191; display: grid; grid-template-columns: 74px 21px 70px 345px 70px 19px 102px 8px 54px 50px 1fr; }
.ctl { position: relative; display: flex; flex-direction: column; align-items: center; padding-top: 4px; font-size: 10.500px; line-height: 16px; letter-spacing: -.33px; }
.ctl svg { width: 20px; height: 22px; color: #ddd; }
.ctl .wide { width: 24px; }
.ctl sup { position: absolute; top: 1px; left: 46px; color: #ddd; font-size: 9.500px; line-height: 12px; letter-spacing: 0; }
.ctl.clip { overflow: hidden; }
.caret { width: 10px; height: 6px; margin: 16px 0 0 5px; }
.people-c { grid-column: 5; }
.people-c + .ctl { grid-column: 7; }
.ctl.chat { grid-column: 9; background: #ff8225; color: #fff; font-weight: 600; width: 54px; }
.chat .wide { width: 22px; height: 22px; }
.ctl.chat sup { left: 39px; font-weight: 400; color: #fff; }
.leave { justify-self: end; width: 50px; height: 23px; margin: 10px 13px 0 0; border: 0; border-radius: 7px; background: #e02828; color: #fff; font: 700 11px "Open Sans", sans-serif; padding: 0; }

.taskbar { height: 33px; flex: none; margin-left: 1px; background: linear-gradient(90deg, #203a42, #1f3743 55%, #1d3040 72%, #1b2744 88%, #1a2544); display: flex; align-items: center; color: #fff; }
.cell { width: 40.400px; height: 33px; flex: none; display: flex; align-items: center; justify-content: center; }
.cell svg { width: 18px; height: 18px; }
.cell .big { width: 20px; height: 20px; }
.start { width: 39px; }
.start svg { width: 14px; height: 14px; }
.search { width: 280px; height: 32px; background: #f2f2f2; color: #444; display: flex; align-items: center; padding-left: 10px; font-size: 12px; gap: 8px; letter-spacing: -.1px; }
.search svg { width: 14px; height: 14px; }
.open { background: linear-gradient(#76b9ed, #76b9ed) center bottom / 33px 2px no-repeat; }
.current { background: linear-gradient(#76b9ed, #76b9ed) bottom / 100% 2px no-repeat, #4c606e; }
.tray { width: 72px; height: 12px; margin-left: 231px; }
.clock { width: 52px; margin-left: 6px; display: flex; flex-direction: column; align-items: center; font-size: 9.500px; line-height: 15px; letter-spacing: -.15px; }
.notif { width: 14px; height: 14px; margin-left: 13px; }
.desk { width: 1px; height: 33px; background: #57617a; margin-left: auto; margin-right: 3px; }

.notepad { position: absolute; left: 916px; top: 172px; width: 337px; height: 223px; background: #fff; border: 1px solid #888; border-right: 0; border-top: 0; color: #222; }
.ntitle { height: 24px; display: flex; align-items: center; font-size: 9.500px; padding-left: 6px; letter-spacing: -.13px; }
.ntitle svg { width: 12px; height: 12px; margin-right: 4px; }
.ntitle span { width: 243px; }
.min { width: 8px; height: 1px; background: #333; }
.max { width: 8px; height: 8px; border: 1px solid #333; margin-left: 30px; }
.nmenu { height: 18px; display: flex; align-items: center; gap: 9px; padding-left: 4px; font-size: 9.500px; border-bottom: 1px solid #eee; }
.ntext { height: 148px; padding: 43px 0 0 9px; display: flex; font: 33px/42px "DejaVu Sans Mono", monospace; color: #000; letter-spacing: .35px; }
.ntext i { width: 1px; height: 42px; background: #000; flex: none; margin-right: -1px; }
.nscroll { height: 13px; background: #f0f0f0; padding: 3px 4px; }
.nscroll svg { width: 4px; height: 7px; }
.nstatus { height: 19px; background: #f1f1f1; border-top: 1px solid #ddd; display: grid; grid-template-columns: 14px 114px 41px 98px 69px; font-size: 9.500px; line-height: 18px; letter-spacing: -.1px; }
.nstatus span { border-right: 1px solid #ddd; padding-left: 5px; }
.nstatus span:nth-child(2) { padding-left: 7px; }
.nstatus span:last-child { border: 0; }
```
